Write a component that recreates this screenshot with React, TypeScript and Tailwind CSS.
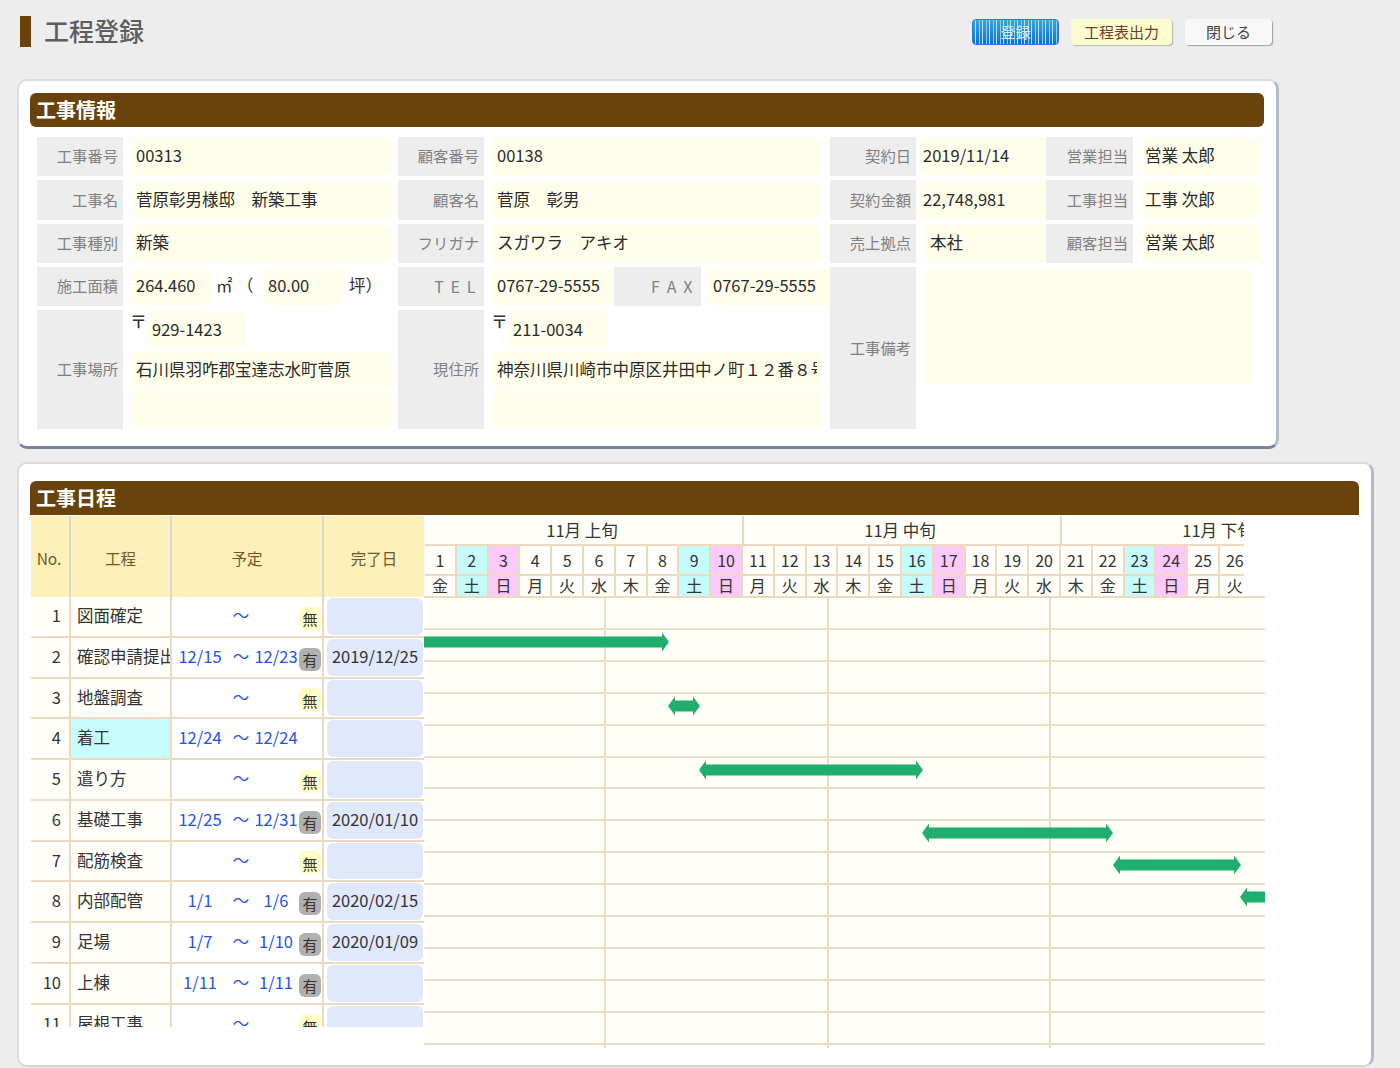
import React from "react";

const WEEK = ["金", "土", "日", "月", "火", "水", "木"];

const days = Array.from({ length: 30 }, (_, i) => ({
  day: i + 1,
  week: WEEK[i % 7],
}));

const dayColor = (week: string) => {
  if (week === "土") return "bg-[#c6fbfc]";
  if (week === "日") return "bg-[#fcc9fb]";
  return "bg-[#fffef8]";
};

const rows = [
  { no: 1, name: "図面確定", from: "", to: "", badge: "無", done: "" },
  { no: 2, name: "確認申請提出", from: "12/15", to: "12/23", badge: "有", done: "2019/12/25" },
  { no: 3, name: "地盤調査", from: "", to: "", badge: "無", done: "" },
  { no: 4, name: "着工", from: "12/24", to: "12/24", badge: "", done: "", active: true },
  { no: 5, name: "遣り方", from: "", to: "", badge: "無", done: "" },
  { no: 6, name: "基礎工事", from: "12/25", to: "12/31", badge: "有", done: "2020/01/10" },
  { no: 7, name: "配筋検査", from: "", to: "", badge: "無", done: "" },
  { no: 8, name: "内部配管", from: "1/1", to: "1/6", badge: "有", done: "2020/02/15" },
  { no: 9, name: "足場", from: "1/7", to: "1/10", badge: "有", done: "2020/01/09" },
  { no: 10, name: "上棟", from: "1/11", to: "1/11", badge: "有", done: "" },
  { no: 11, name: "屋根工事", from: "", to: "", badge: "無", done: "" },
];

// chart rows: bars keyed by row index, x is relative to the chart body
const bars: Record<number, { x: number; w: number; left: boolean; right: boolean }> = {
  1: { x: 0, w: 245, left: false, right: true },
  3: { x: 244, w: 32, left: true, right: true },
  5: { x: 275, w: 224, left: true, right: true },
  7: { x: 498, w: 191, left: true, right: true },
  8: { x: 689, w: 128, left: true, right: true },
  9: { x: 816, w: 25, left: true, right: false },
};

const Label: React.FC<{ className?: string; children?: React.ReactNode }> = ({ className, children }) => (
  <div className={`flex items-center justify-end pr-[5px] pb-[2px] bg-[#ededed] text-[#808080] text-[15.3px] shrink-0 whitespace-nowrap ${className ?? "w-[86px]"}`}>
    {children}
  </div>
);

const Value: React.FC<{ className?: string; children?: React.ReactNode }> = ({ className, children }) => (
  <div className={`flex items-center pb-[2px] bg-[#fffeeb] rounded-[6px] text-[#2a2a2a] text-[16.5px] shrink-0 whitespace-nowrap overflow-hidden ${className ?? "pl-[5px]"}`}>
    {children}
  </div>
);

const Arrow: React.FC<{ w: number; left: boolean; right: boolean }> = ({ w, left, right }) => {
  const l = left ? 7 : 0;
  const r = right ? w - 7 : w;
  const pts = [
    [l, 4.5],
    ...(left ? [[l, 0.5], [0, 10], [l, 19.5]] : []),
    [l, 15.5],
    [r, 15.5],
    ...(right ? [[r, 19.5], [w, 10], [r, 0.5]] : []),
    [r, 4.5],
  ];
  return (
    <svg width={w} height={20} viewBox={`0 0 ${w} 20`}>
      <polygon points={pts.map((p) => p.join(",")).join(" ")} fill="#1fae6b" />
    </svg>
  );
};

const ScheduleRow: React.FC<{ row: (typeof rows)[number] }> = ({ row }) => (
  <div className="grid grid-cols-[40px_101px_152px_100px] h-[40.75px] shrink-0 border-b-2 border-[#ecd9c0] text-[16.5px] text-[#333]">
    <div className="flex items-center justify-end pr-[8px] pb-[2px] bg-[#fffef8] border-r-2 border-[#ecd9c0]">{row.no}</div>
    <div className={`flex items-center pl-[6px] pb-[2px] border-r-2 border-[#ecd9c0] overflow-hidden whitespace-nowrap ${row.active ? "bg-[#c6fcfc]" : "bg-[#fffef8]"}`}>
      {row.name}
    </div>
    <div className="flex items-center bg-white border-r-2 border-[#ecd9c0] text-[#2450f0]">
      <span className="w-[56px] pb-[2px] text-center">{row.from}</span>
      <span className="w-[26px] pb-[2px] text-center">〜</span>
      <span className="w-[44px] pb-[2px] text-center">{row.to}</span>
      {row.badge && (
        <span
          className={`ml-[1px] mt-[4px] pt-[2px] flex items-center justify-center w-[22px] h-[23px] rounded-[6px] text-[15px] text-[#333] ${
            row.badge === "有" ? "bg-[#b0b0b0]" : "bg-[#fffcc6]"
          }`}
        >
          {row.badge}
        </span>
      )}
    </div>
    <div className="bg-white pl-[3px] py-[1px]">
      <div className="flex items-center justify-center pb-[2px] h-full w-[96px] rounded-[6px] bg-[#e0e8fb]">{row.done}</div>
    </div>
  </div>
);

export default function App() {
  return (
    <div className="w-[1400px] h-[1068px] overflow-hidden bg-[#ededed] [font-family:'Noto_Sans_CJK_JP','Noto_Sans',sans-serif]">
      {/* title */}
      <div className="flex items-start h-[79px] pl-[20px] pr-[128px] pt-[16px]">
        <div className="w-[11px] h-[31px] bg-[#6a430c]" />
        <h1 className="ml-[13px] -mt-[1px] text-[25px] leading-[31px] font-medium text-[#5e5e5e]">工程登録</h1>
        <div className="ml-auto mt-[3px] flex">
          <button className="w-[87px] h-[26px] rounded-[4px] border border-[#2a78d8] text-[15px] text-[#d8eefa] bg-[repeating-linear-gradient(90deg,transparent_0px,transparent_2px,#b8e2f8_2px,#b8e2f8_3px,transparent_3px,transparent_6px,#8ccdf0_6px,#8ccdf0_7px),linear-gradient(180deg,#38a4e8,#0f74cc)]">
            登録
          </button>
          <button className="ml-[12px] w-[101px] h-[26px] rounded-[4px] bg-[#fdfbd2] text-[15px] text-[#6b3f24] shadow-[1px_1px_1px_#b5b5a0]">
            工程表出力
          </button>
          <button className="ml-[13px] w-[87px] h-[26px] rounded-[4px] bg-[#f8f8f8] text-[15px] text-[#444] shadow-[1px_1px_1px_#a0a0a0]">
            閉じる
          </button>
        </div>
      </div>

      {/* 工事情報 */}
      <section className="ml-[17px] w-[1262px] h-[370px] pt-[12px] pl-[11px] bg-white rounded-[10px] border-2 border-t-[#dcdcdc] border-l-[#dcdcdc] border-r-[3px] border-r-[#b4bac6] border-b-[3px] border-b-[#76829a]">
        <div className="flex items-center w-[1234px] h-[34px] pl-[6px] rounded-[6px] bg-[#6a430c] text-white text-[20px] font-bold">工事情報</div>
        <div className="mt-[10px] ml-[7px] flex flex-col gap-[4px]">
          <div className="flex h-[39.33px]">
            <Label>工事番号</Label>
            <Value className="ml-[8px] pl-[5px] w-[261px] my-[1px]">00313</Value>
            <Label className="ml-[6px] w-[86px]">顧客番号</Label>
            <Value className="ml-[8px] pl-[5px] w-[329px] my-[1px]">00138</Value>
            <Label className="ml-[9px] w-[86px]">契約日</Label>
            <Value className="ml-[4px] w-[126px] my-[1px] rounded-r-none pl-[3px]">2019/11/14</Value>
            <Label className="w-[87px]">営業担当</Label>
            <Value className="ml-[8px] pl-[4px] w-[120px] my-[1px]">営業 太郎</Value>
          </div>
          <div className="flex h-[39.33px]">
            <Label>工事名</Label>
            <Value className="ml-[8px] pl-[5px] w-[261px] my-[1px]">菅原彰男様邸　新築工事</Value>
            <Label className="ml-[6px] w-[86px]">顧客名</Label>
            <Value className="ml-[8px] pl-[5px] w-[329px] my-[1px]">菅原　彰男</Value>
            <Label className="ml-[9px] w-[86px]">契約金額</Label>
            <Value className="ml-[4px] w-[126px] my-[1px] rounded-r-none pl-[3px]">22,748,981</Value>
            <Label className="w-[87px]">工事担当</Label>
            <Value className="ml-[8px] pl-[4px] w-[120px] my-[1px]">工事 次郎</Value>
          </div>
          <div className="flex h-[39.33px]">
            <Label>工事種別</Label>
            <Value className="ml-[8px] pl-[5px] w-[261px] my-[1px]">新築</Value>
            <Label className="ml-[6px] w-[86px]">フリガナ</Label>
            <Value className="ml-[8px] pl-[5px] w-[329px] my-[1px]">スガワラ　アキオ</Value>
            <Label className="ml-[9px] w-[86px]">売上拠点</Label>
            <Value className="ml-[9px] pl-[5px] w-[121px] my-[1px] rounded-r-none">本社</Value>
            <Label className="w-[87px]">顧客担当</Label>
            <Value className="ml-[8px] pl-[4px] w-[120px] my-[1px]">営業 太郎</Value>
          </div>

          <div className="flex">
            <div className="flex flex-col gap-[4px] w-[793px]">
              <div className="flex h-[39.33px]">
                <Label>施工面積</Label>
                <Value className="ml-[8px] pl-[5px] w-[80px] my-[1px]">264.460</Value>
                <span className="ml-[5px] pb-[2px] w-[21px] flex items-center text-[16.5px] text-[#333]">㎡</span>
                <span className="w-[26px] pb-[2px] flex items-center text-[16.5px] text-[#333]">（</span>
                <Value className="pl-[5px] w-[80px] my-[1px]">80.00</Value>
                <span className="ml-[6px] pb-[2px] w-[49px] flex items-center text-[16.5px] text-[#333]">坪）</span>
                <Label className="w-[86px] pr-[7px] tracking-[0.1em] text-[16px]">T E L</Label>
                <Value className="ml-[8px] pl-[5px] w-[122px] my-[1px] rounded-r-none">0767-29-5555</Value>
                <Label className="w-[87px] pr-[7px] tracking-[0.1em] text-[16px]">F A X</Label>
                <Value className="ml-[7px] pl-[5px] w-[121px] my-[1px] rounded-r-none">0767-29-5555</Value>
              </div>
              <div className="flex h-[119px]">
                <Label>工事場所</Label>
                <div className="ml-[8px] w-[261px] flex flex-col">
                  <div className="flex mt-[2px]">
                    <span className="w-[16px] -ml-[1px] mr-[1px] text-[17px] leading-[18px] font-medium text-[#333]">〒</span>
                    <Value className="pl-[5px] w-[99px] h-[36px]">929-1423</Value>
                  </div>
                  <Value className="pl-[5px] mt-[4px] h-[36px] w-[261px]">石川県羽咋郡宝達志水町菅原</Value>
                  <Value className="pl-[5px] mt-[3px] h-[37px] w-[261px]"> </Value>
                </div>
                <Label className="ml-[6px] w-[86px]">現住所</Label>
                <div className="ml-[8px] w-[329px] flex flex-col">
                  <div className="flex mt-[2px]">
                    <span className="w-[16px] -ml-[1px] mr-[1px] text-[17px] leading-[18px] font-medium text-[#333]">〒</span>
                    <Value className="pl-[5px] w-[100px] h-[36px]">211-0034</Value>
                  </div>
                  <Value className="pl-[5px] mt-[4px] h-[36px] w-[329px]">
                    <span className="block w-[320px] overflow-hidden">神奈川県川崎市中原区井田中ノ町１２番８号</span>
                  </Value>
                  <Value className="pl-[5px] mt-[3px] h-[37px] w-[329px]"> </Value>
                </div>
              </div>
            </div>
            <Label className="w-[86px]">工事備考</Label>
            <div className="ml-[9px] mt-[2px] w-[328px] h-[114px] rounded-[6px] bg-[#fffeeb]" />
          </div>
        </div>
      </section>

      {/* 工事日程 */}
      <section className="mt-[13px] ml-[17px] w-[1357px] h-[605px] pt-[17px] pl-[11px] bg-white rounded-[10px] border-2 border-t-[#dcdcdc] border-l-[#dcdcdc] border-r-[3px] border-r-[#b4bac6] border-b-[#d4d4d4]">
        <div className="flex items-center w-[1329px] h-[34px] pl-[6px] rounded-t-[6px] bg-[#6a430c] text-white text-[20px] font-bold">工事日程</div>
        <div className="mt-[1px] flex items-start">
          {/* left table */}
          <div className="ml-[1px] w-[393px] h-[511px] overflow-hidden flex flex-col">
            <div className="grid grid-cols-[40px_101px_152px_100px] h-[81px] shrink-0 bg-[#fdf0b8] text-[15.5px] text-[#75562a]">
              <div className="flex items-center justify-center pt-[5px] pr-[2px] border-r-2 border-[#d9d8cc]">No.</div>
              <div className="flex items-center justify-center pt-[5px] border-r-2 border-[#d9d8cc]">工程</div>
              <div className="flex items-center justify-center pt-[5px] border-r-2 border-[#d9d8cc]">予定</div>
              <div className="flex items-center justify-center pt-[5px]">完了日</div>
            </div>
            {rows.map((row) => (
              <ScheduleRow key={row.no} row={row} />
            ))}
          </div>

          {/* chart */}
          <div className="w-[841px] flex flex-col">
            <div className="w-[820px] overflow-hidden text-[16px] text-[#333]">
              <div className="w-[955px] pl-[1px]">
                <div className="flex h-[30px] pl-[1px] bg-[#fffef8] border-b-2 border-[#ecd9c0] text-[16.5px]">
                  {["11月 上旬", "11月 中旬", "11月 下旬"].map((t) => (
                    <div key={t} className="flex items-center justify-center pr-[4px] w-[318px] shrink-0 border-r-2 border-[#ecd9c0]">
                      {t}
                    </div>
                  ))}
                </div>
                <div className="flex h-[30px] border-b-2 border-[#ecd9c0]">
                  {days.map((d) => (
                    <div key={d.day} className={`flex items-center justify-center w-[31.8px] shrink-0 border-r-2 border-[#ecd9c0] ${dayColor(d.week)}`}>
                      {d.day}
                    </div>
                  ))}
                </div>
                <div className="flex h-[20px] overflow-hidden">
                  {days.map((d) => (
                    <div key={d.day} className={`flex justify-center leading-[19px] w-[31.8px] shrink-0 border-r-2 border-[#ecd9c0] ${dayColor(d.week)}`}>
                      {d.week}
                    </div>
                  ))}
                </div>
              </div>
            </div>
            <div className="relative h-[452px] bg-[#fffef8] border-t-2 border-[#ecd9c0]">
              {Array.from({ length: 14 }, (_, i) => (
                <div key={i} className="relative h-[31.92px] border-b-2 border-[#eedcc6]">
                  {bars[i] && (
                    <div className="absolute top-[2px] z-10" style={{ left: bars[i].x }}>
                      <Arrow w={bars[i].w} left={bars[i].left} right={bars[i].right} />
                    </div>
                  )}
                </div>
              ))}
              <div className="absolute top-0 bottom-0 left-[180px] w-[2px] bg-[#eedcc6]" />
              <div className="absolute top-0 bottom-0 left-[403px] w-[2px] bg-[#eedcc6]" />
              <div className="absolute top-0 bottom-0 left-[625px] w-[2px] bg-[#eedcc6]" />
            </div>
          </div>
        </div>
      </section>
    </div>
  );
}
